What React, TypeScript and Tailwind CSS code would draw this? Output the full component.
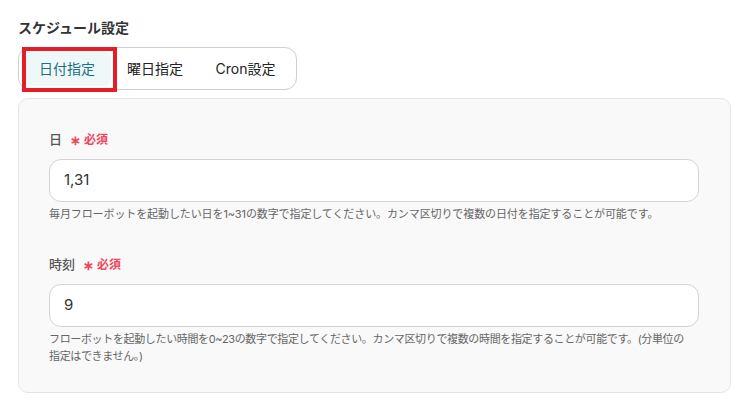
import React from "react";

const font = { fontFamily: 'Inter, "Noto Sans CJK JP", sans-serif' };

function Field({ label, value, children }: { label: string; value: string; children: React.ReactNode }) {
  return (
    <div className="flex flex-col">
      <div className="flex items-center h-[20px] text-[13px] font-medium text-[#555]">
        <span>{label}</span>
        <span className="ml-[8px] text-[#f0455b] text-[13px] font-bold leading-none">∗</span>
        <span className="ml-[3px] text-[#f0455b] text-[12px] font-bold">必須</span>
      </div>
      <div className="mt-[9px] h-[43px] rounded-[12px] border border-[#d4d4d8] bg-white flex items-center px-[14px] text-[15px] text-[#333]">
        {value}
      </div>
      {children}
    </div>
  );
}

export default function App() {
  return (
    <div className="w-[743px] h-[412px] bg-white px-[18px] pt-[18px]" style={font}>
      <h2 className="text-[14px] leading-[20px] font-bold text-[#333]">スケジュール設定</h2>
      <div className="mt-[9px] relative inline-flex items-center h-[43px] rounded-[12px] border border-[#cfcfcf] p-[4px]">
        <div className="h-[35px] w-[88px] flex items-center justify-center rounded-[8px] bg-[#eef8f8] text-[14px] text-[#1d6f86]">
          日付指定
        </div>
        <div className="h-[35px] w-[88px] flex items-center justify-center text-[14px] text-[#222]">
          曜日指定
        </div>
        <div className="h-[35px] w-[93px] flex items-center justify-center text-[14px] text-[#222]">
          Cron設定
        </div>
        <div className="absolute left-[3px] top-[-1px] w-[95px] h-[45px] border-[4px] border-[#e41e26] pointer-events-none" />
      </div>
      <div className="mt-[8px] w-[713px] h-[295px] rounded-[10px] border border-[#e5e5e5] bg-[#f9f9f9] pl-[30px] pr-[31px] pt-[31px] flex flex-col">
        <Field label="日" value="1,31">
          <p className="mt-[4px] text-[11px] leading-[17px] tracking-[-0.1px] text-[#666]">
            毎月フローボットを起動したい日を1~31の数字で指定してください。カンマ区切りで複数の日付を指定することが可能です。
          </p>
        </Field>
        <div className="mt-[32px]">
          <Field label="時刻" value="9">
            <p className="mt-[4px] text-[11px] leading-[17px] tracking-[-0.35px] whitespace-nowrap text-[#666]">
              フローボットを起動したい時間を0~23の数字で指定してください。カンマ区切りで複数の時間を指定することが可能です。(分単位の
              <br />
              指定はできません。)
            </p>
          </Field>
        </div>
      </div>
    </div>
  );
}
